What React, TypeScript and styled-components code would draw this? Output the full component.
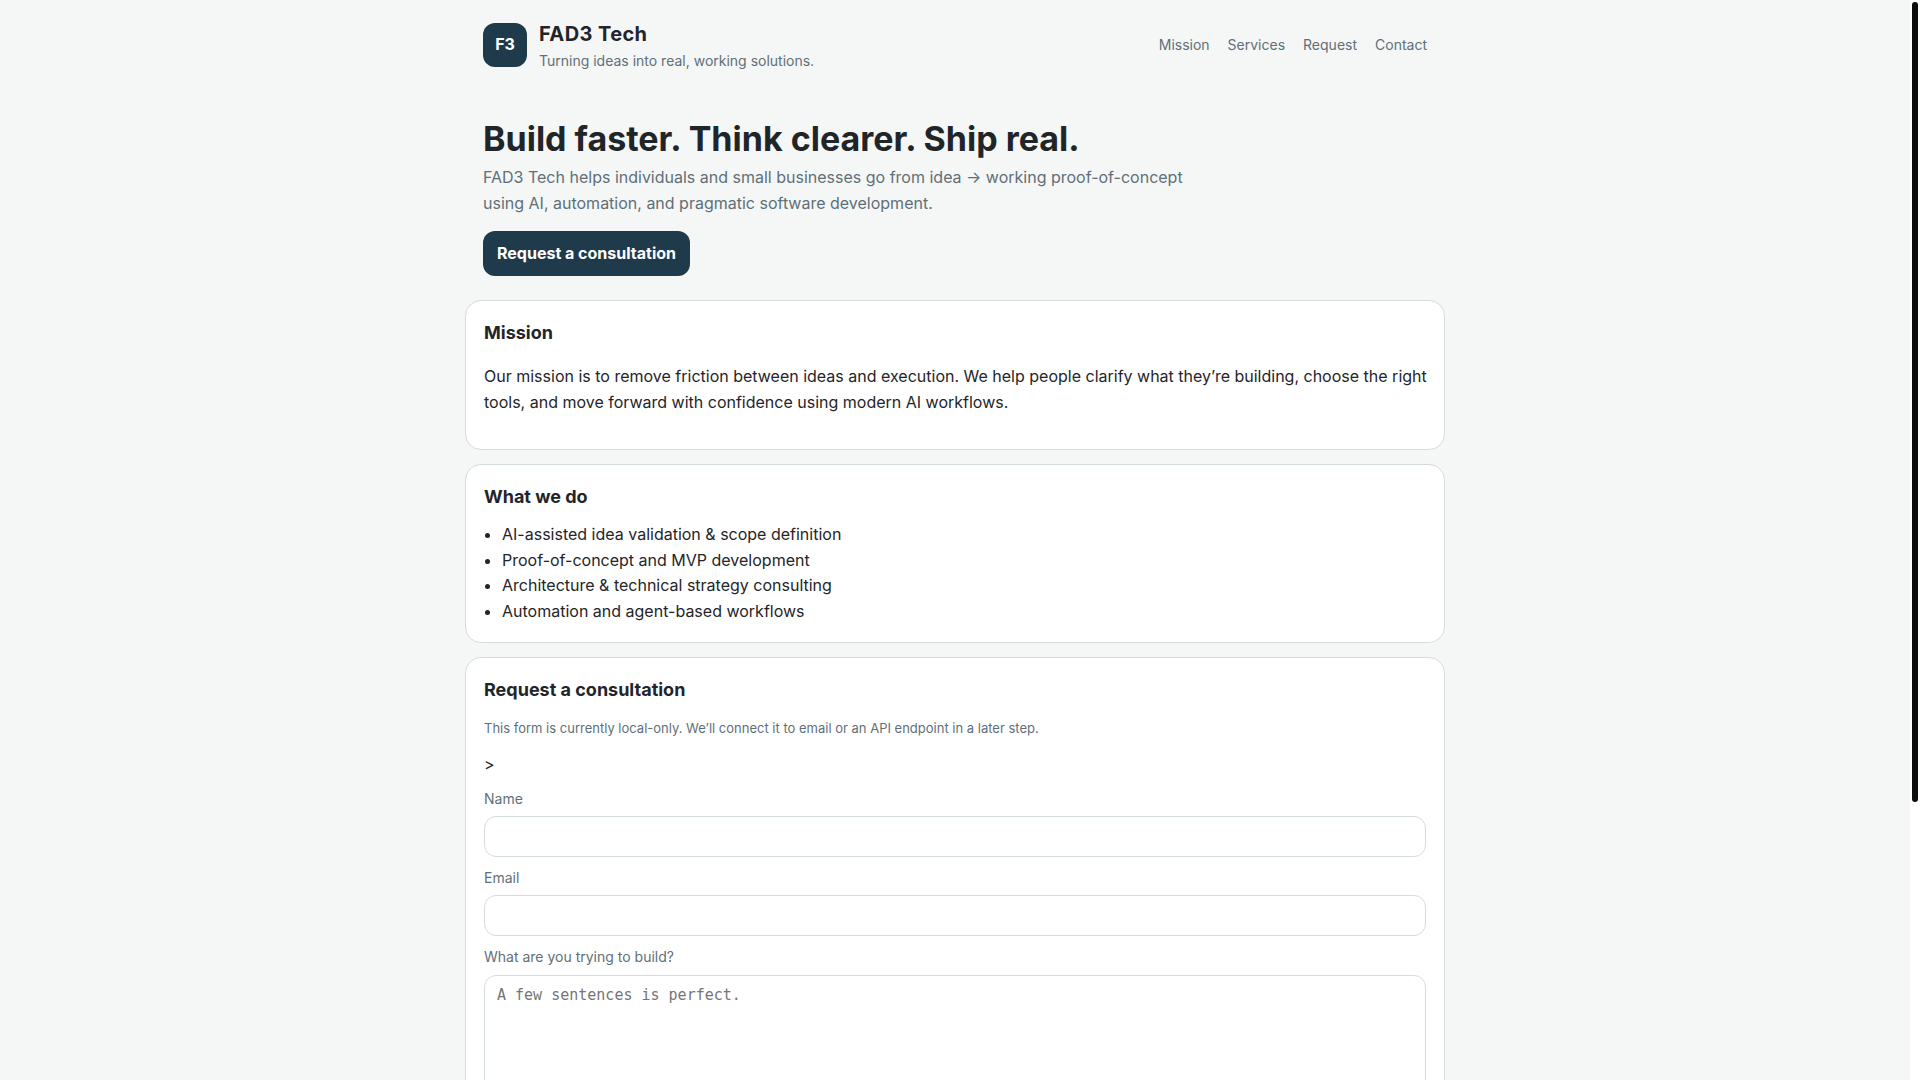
import React, { useEffect, useRef, useState } from "react";
import styled, { createGlobalStyle, ThemeProvider } from "styled-components";

const theme = {
  bg: "#f5f7f6",
  surface: "#ffffff",
  text: "#1f2529",
  muted: "#5f6f78",
  primary: "#1f3a4a",
  border: "#d5dce0",
  font: '"Inter", "Liberation Sans", sans-serif',
  mono: '"DejaVu Sans Mono", monospace',
};

const GlobalStyle = createGlobalStyle`
  * { box-sizing: border-box; }
  body {
    margin: 0;
    font-family: ${theme.font};
    font-size: 16px;
    line-height: 1.6;
    color: ${theme.text};
    background: ${theme.bg};
  }
`;

const Page = styled.div`
  display: flex;
  height: 100vh;
`;

const Scroller = styled.div`
  flex: 1;
  min-width: 0;
  overflow-y: auto;
  scrollbar-width: none;
`;

const ScrollTrack = styled.div`
  flex: none;
  width: 10px;
  padding: 2px;
  background: #ffffff;
`;

const ScrollThumb = styled.div`
  width: 6px;
  border-radius: 3px;
  background: #0b0d0e;
`;

const Container = styled.div`
  max-width: 980px;
  margin: 0 auto;
  padding-bottom: 244px;
`;

const Header = styled.header`
  display: flex;
  align-items: center;
  justify-content: space-between;
  padding: 18px;
`;

const Brand = styled.div`
  display: flex;
  align-items: center;
  gap: 12px;
`;

const Logo = styled.div`
  display: grid;
  place-items: center;
  width: 44px;
  height: 44px;
  border-radius: 12px;
  background: ${(p) => p.theme.primary};
  color: #ffffff;
  font-weight: 700;
`;

const BrandName = styled.div`
  font-size: 20px;
  font-weight: 700;
  letter-spacing: 0.02em;
`;

const Tagline = styled.div`
  font-size: 14px;
  color: ${(p) => p.theme.muted};
`;

const Nav = styled.nav`
  display: flex;
  gap: 18px;
`;

const NavLink = styled.a`
  font-size: 14px;
  color: ${(p) => p.theme.muted};
  text-decoration: none;
`;

const Hero = styled.section`
  padding: 28px 18px 24px;
`;

const HeroTitle = styled.h1`
  margin: 0 0 6px;
  font-size: 34px;
  line-height: 41px;
`;

const Lead = styled.p`
  max-width: 720px;
  margin: 0 0 14px;
  color: ${(p) => p.theme.muted};
`;

const CtaLink = styled.a`
  display: inline-block;
  vertical-align: top;
  padding: 10px 14px;
  border-radius: 12px;
  background: ${(p) => p.theme.primary};
  color: #ffffff;
  font-weight: 700;
  text-decoration: none;
`;

const Card = styled.section`
  margin-bottom: 14px;
  padding: 18px;
  border: 1px solid ${(p) => p.theme.border};
  border-radius: 16px;
  background: ${(p) => p.theme.surface};
`;

const CardTitle = styled.h2`
  margin: 0 0 10px;
  font-size: 18px;
`;

const Text = styled.p`
  margin: 16px -8px 16px 0;
`;

const Note = styled.p`
  margin: 13px 0;
  font-size: 13px;
  color: ${(p) => p.theme.muted};
`;

const List = styled.ul`
  margin: 0;
  padding-left: 18px;
`;

const Label = styled.label`
  display: block;
  margin: 10px 0 6px;
  font-size: 14px;
  color: ${(p) => p.theme.muted};
`;

const Input = styled.input`
  display: block;
  width: 100%;
  padding: 10px 12px;
  border: 1px solid ${(p) => p.theme.border};
  border-radius: 12px;
  background: ${(p) => p.theme.surface};
  color: inherit;
  font-family: ${(p) => p.theme.font};
  font-size: 15px;
`;

const TextArea = styled.textarea`
  display: block;
  width: 100%;
  min-height: 200px;
  padding: 10px 12px;
  border: 1px solid ${(p) => p.theme.border};
  border-radius: 12px;
  background: ${(p) => p.theme.surface};
  color: inherit;
  font-family: ${(p) => p.theme.mono};
  font-size: 15px;
  resize: vertical;
`;

const links = [
  { href: "#mission", label: "Mission" },
  { href: "#services", label: "Services" },
  { href: "#request", label: "Request" },
  { href: "#contact", label: "Contact" },
];

const services = [
  "AI-assisted idea validation & scope definition",
  "Proof-of-concept and MVP development",
  "Architecture & technical strategy consulting",
  "Automation and agent-based workflows",
];

export default function App() {
  const scroller = useRef<HTMLDivElement>(null);
  const [thumb, setThumb] = useState({ size: 0, offset: 0 });

  const updateThumb = () => {
    const el = scroller.current;
    if (!el) return;
    const scale = (el.clientHeight - 4) / el.scrollHeight;
    setThumb({
      size: Math.round(el.clientHeight * scale),
      offset: Math.round(el.scrollTop * scale),
    });
  };

  useEffect(() => {
    updateThumb();
    window.addEventListener("resize", updateThumb);
    return () => window.removeEventListener("resize", updateThumb);
  }, []);

  return (
    <ThemeProvider theme={theme}>
      <GlobalStyle />
      <Page>
        <Scroller ref={scroller} onScroll={updateThumb}>
          <Container>
            <Header>
              <Brand>
                <Logo>F3</Logo>
                <div>
                  <BrandName>FAD3 Tech</BrandName>
                  <Tagline>Turning ideas into real, working solutions.</Tagline>
                </div>
              </Brand>
              <Nav>
                {links.map((link) => (
                  <NavLink key={link.href} href={link.href}>
                    {link.label}
                  </NavLink>
                ))}
              </Nav>
            </Header>

            <main>
              <Hero>
                <HeroTitle>Build faster. Think clearer. Ship real.</HeroTitle>
                <Lead>
                  FAD3 Tech helps individuals and small businesses go from idea → working
                  proof-of-concept using AI, automation, and pragmatic software development.
                </Lead>
                <CtaLink href="#request">Request a consultation</CtaLink>
              </Hero>

              <Card id="mission">
                <CardTitle>Mission</CardTitle>
                <Text>
                  Our mission is to remove friction between ideas and execution. We help people
                  clarify what they’re building, choose the right tools, and move forward with
                  confidence using modern AI workflows.
                </Text>
              </Card>

              <Card id="services">
                <CardTitle>What we do</CardTitle>
                <List>
                  {services.map((service) => (
                    <li key={service}>{service}</li>
                  ))}
                </List>
              </Card>

              <Card id="request">
                <CardTitle>Request a consultation</CardTitle>
                <Note>
                  This form is currently local-only. We’ll connect it to email or an API endpoint
                  in a later step.
                </Note>
                <form>
                  &gt;
                  <Label htmlFor="name">Name</Label>
                  <Input id="name" name="name" type="text" />
                  <Label htmlFor="email">Email</Label>
                  <Input id="email" name="email" type="email" />
                  <Label htmlFor="idea">What are you trying to build?</Label>
                  <TextArea id="idea" name="idea" placeholder="A few sentences is perfect." />
                </form>
              </Card>
            </main>
          </Container>
        </Scroller>
        <ScrollTrack aria-hidden="true">
          <ScrollThumb style={{ height: thumb.size, marginTop: thumb.offset }} />
        </ScrollTrack>
      </Page>
    </ThemeProvider>
  );
}
